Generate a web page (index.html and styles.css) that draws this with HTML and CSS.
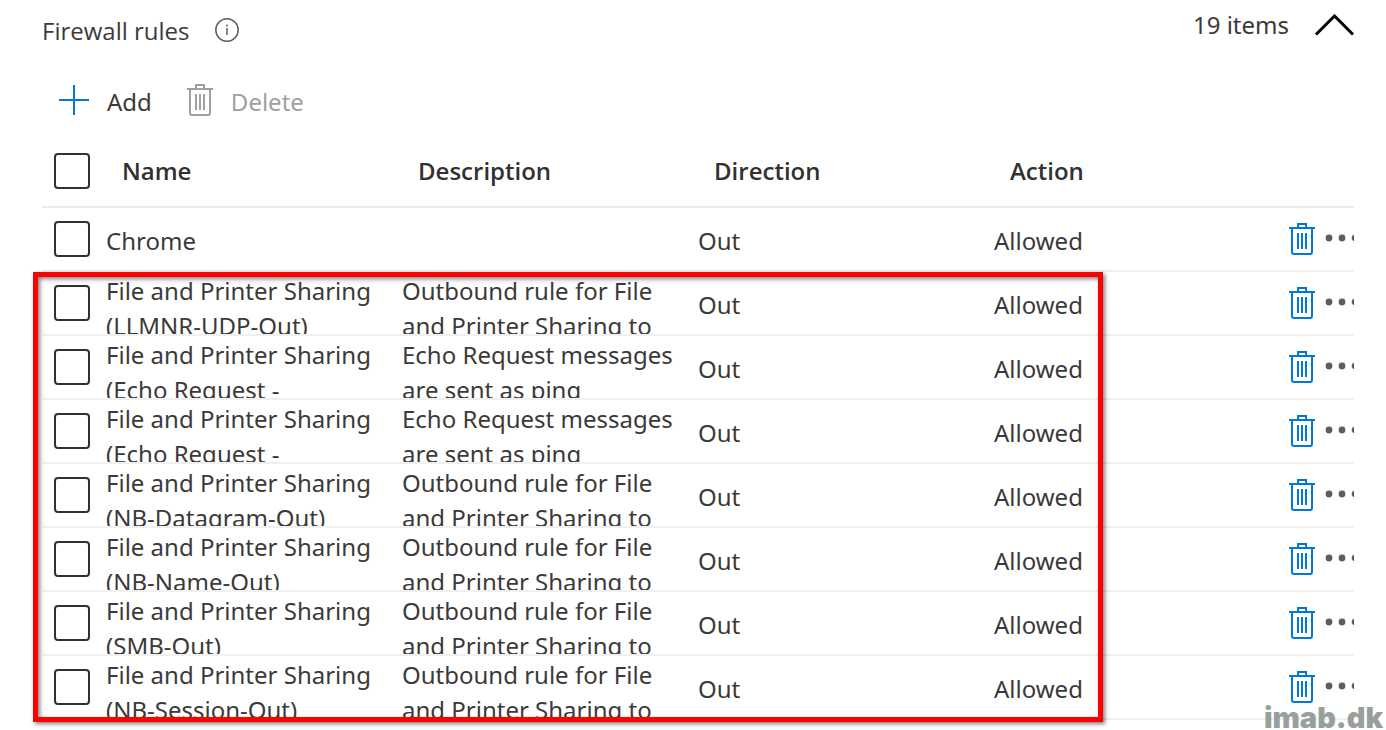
FILE: index.html
```html
<!DOCTYPE html>
<html lang="en">
<head>
    <meta charset="UTF-8">
    <meta name="viewport" content="width=device-width, initial-scale=1.0">
    <title>Firewall rules</title>
    <link rel="stylesheet" href="styles.css">
</head>
<body>

    <!-- Shared icons -->
    <svg class="icon-defs" width="0" height="0" aria-hidden="true">
        <symbol id="icon-trash" viewBox="0 0 26 32">
            <path d="M0 5h26M9 5V1h8v4M3 5v24q0 2 2 2h16q2 0 2-2V5M9 10v16M13 10v16M17 10v16" fill="none" stroke="currentColor" stroke-width="2"/>
        </symbol>
        <symbol id="icon-more" viewBox="0 0 29 8">
            <circle cx="4" cy="4" r="3.400"/>
            <circle cx="17" cy="4" r="3.400"/>
            <circle cx="30" cy="4" r="3.400"/>
        </symbol>
    </svg>

    <main class="panel">
        <header class="panel-header">
            <h1>Firewall rules</h1>
            <button class="info" aria-label="More information">
                <svg width="24" height="24" viewBox="0 0 24 24" fill="none" stroke="currentColor">
                    <circle cx="12" cy="12" r="11.200" stroke-width="1.500"/>
                    <path d="M12 10v7M12 6.500v2" stroke-width="1.500"/>
                </svg>
            </button>
            <span class="count">19 items</span>
            <button class="collapse" aria-label="Collapse">
                <svg width="40" height="22" viewBox="0 0 40 22" fill="none" stroke="currentColor" stroke-width="3">
                    <path d="M2 20.500L20.500 2L39 20.500"/>
                </svg>
            </button>
        </header>

        <div class="toolbar">
            <button class="add">
                <svg width="30" height="30" viewBox="0 0 30 30" stroke="#0078d4" stroke-width="2"><path d="M15 0v30M0 15h30"/></svg>
                <span>Add</span>
            </button>
            <button class="delete" disabled>
                <svg width="26" height="32"><use href="#icon-trash"/></svg>
                <span>Delete</span>
            </button>
        </div>

        <table class="rules">
            <colgroup>
                <col class="col-check">
                <col>
                <col>
                <col>
                <col>
                <col class="col-actions">
            </colgroup>
            <thead>
                <tr>
                    <th><input type="checkbox" aria-label="Select all"></th>
                    <th>Name</th>
                    <th>Description</th>
                    <th>Direction</th>
                    <th>Action</th>
                    <th></th>
                </tr>
            </thead>
            <tbody id="ruleRows"></tbody>
        </table>

        <div class="highlight"></div>
    </main>

    <div class="watermark">imab.dk</div>

    <script>
        const outbound = "Outbound rule for File and Printer Sharing to";
        const echo = "Echo Request messages are sent as ping";

        const rules = [
            { name: "Chrome", description: "" },
            { name: "File and Printer Sharing (LLMNR-UDP-Out)", description: outbound },
            { name: "File and Printer Sharing (Echo Request -", description: echo },
            { name: "File and Printer Sharing (Echo Request -", description: echo },
            { name: "File and Printer Sharing (NB-Datagram-Out)", description: outbound },
            { name: "File and Printer Sharing (NB-Name-Out)", description: outbound },
            { name: "File and Printer Sharing (SMB-Out)", description: outbound },
            { name: "File and Printer Sharing (NB-Session-Out)", description: outbound }
        ];

        document.getElementById("ruleRows").innerHTML = rules.map(rule => `
            <tr>
                <td><input type="checkbox" aria-label="Select ${rule.name}"></td>
                <td><div class="cell ${rule.description ? "two-line" : ""}">${rule.name}</div></td>
                <td><div class="cell two-line">${rule.description}</div></td>
                <td><div class="cell">Out</div></td>
                <td><div class="cell">Allowed</div></td>
                <td>
                    <div class="actions">
                        <button aria-label="Delete rule"><svg width="26" height="32"><use href="#icon-trash"/></svg></button>
                        <button class="more" aria-label="More"><svg width="29" height="8"><use href="#icon-more"/></svg></button>
                    </div>
                </td>
            </tr>
        `).join("");
    </script>

</body>
</html>
```

FILE: styles.css
```css
* {
    box-sizing: border-box;
}
body {
    font-family: "Noto Sans", "Open Sans", sans-serif;
    font-size: 24px;
    line-height: 35px;
    margin: 0;
    height: 100vh;
    overflow: hidden;
    background-color: #fff;
    color: #3b3a39;
}
button {
    display: flex;
    align-items: center;
    padding: 0;
    border: none;
    background: none;
    font: inherit;
    color: inherit;
    cursor: pointer;
}
.icon-defs {
    position: absolute;
}
.panel {
    position: relative;
    padding: 0 32px 0 42px;
}
.panel-header {
    display: flex;
    align-items: center;
    height: 60px;
}
.panel-header h1 {
    margin: 0;
    font-family: "Open Sans", sans-serif;
    font-size: 24px;
    font-weight: 400;
}
.info {
    margin-left: 25px;
    color: #605e5c;
}
.count {
    margin-left: auto;
    padding-bottom: 12px;
}
.collapse {
    margin-left: 25px;
    padding-bottom: 10px;
    color: #000;
}
.toolbar {
    display: flex;
    gap: 35px;
    height: 75px;
    padding: 5px 17px 0;
}
.toolbar button {
    gap: 18px;
}
.toolbar span {
    padding-top: 2px;
}
.toolbar .delete {
    color: #a19f9d;
    cursor: default;
}
.rules {
    width: 100%;
    table-layout: fixed;
    border-collapse: collapse;
}
.col-check,
.col-actions {
    width: 64px;
}
.rules th {
    height: 72px;
    padding: 0 0 0 16px;
    border-bottom: 2px solid #eaeaea;
    font-family: "Open Sans", sans-serif;
    font-weight: 600;
    color: #323130;
    text-align: left;
}
.rules td {
    height: 64px;
    padding: 0;
    border-bottom: 2px solid #f0f0f0;
}
.rules th:first-child,
.rules td:first-child {
    padding-left: 12px;
}
.rules input {
    display: block;
    appearance: none;
    width: 36px;
    height: 36px;
    margin: 0;
    border: 2px solid #323130;
    border-radius: 4px;
    background: #fff;
}
.cell {
    padding-top: 2px;
}
.two-line {
    height: 62px;
    padding: 1px 20px 0 0;
    overflow: hidden;
}
.actions {
    display: flex;
    align-items: center;
    justify-content: flex-end;
    gap: 10px;
    color: #0078d4;
}
.actions .more {
    padding-bottom: 2px;
    color: #605e5c;
    fill: currentColor;
}
/* red frame drawn over the file sharing rules */
.highlight {
    position: absolute;
    top: 272px;
    bottom: -2px;
    left: 33px;
    width: 1070px;
    border: 5px solid #f00;
    box-shadow: 2px 2px 4px rgba(0, 0, 0, 0.5), inset 2px 2px 4px rgba(0, 0, 0, 0.5);
    pointer-events: none;
}
.watermark {
    position: absolute;
    right: 3px;
    bottom: 0;
    font-family: Inter, sans-serif;
    font-size: 29px;
    font-weight: 900;
    line-height: 24px;
    color: #98a09c;
}
```
